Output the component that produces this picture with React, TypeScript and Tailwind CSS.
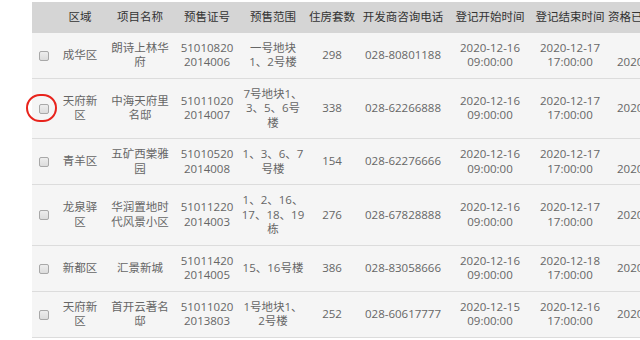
import React from "react";

interface Row {
  area: string[];
  name: string[];
  permit: string[];
  range: string[];
  units: string;
  phone: string;
  start: string[];
  end: string[];
  status: string[];
}

const rows: Row[] = [
  {
    area: ["成华区"],
    name: ["朗诗上林华", "府"],
    permit: ["51010820", "2014006"],
    range: ["一号地块", "1、2号楼"],
    units: "298",
    phone: "028-80801188",
    start: ["2020-12-16", "09:00:00"],
    end: ["2020-12-17", "17:00:00"],
    status: ["\u00a0", "2020-12-19"],
  },
  {
    area: ["天府新", "区"],
    name: ["中海天府里", "名邸"],
    permit: ["51011020", "2014007"],
    range: ["7号地块1、", "3、5、6号", "楼"],
    units: "338",
    phone: "028-62266888",
    start: ["2020-12-16", "09:00:00"],
    end: ["2020-12-17", "17:00:00"],
    status: ["2020-12-19"],
  },
  {
    area: ["青羊区"],
    name: ["五矿西棠雅", "园"],
    permit: ["51010520", "2014008"],
    range: ["1、3、6、7", "号楼"],
    units: "154",
    phone: "028-62276666",
    start: ["2020-12-16", "09:00:00"],
    end: ["2020-12-17", "17:00:00"],
    status: ["\u00a0", "2020-12-19"],
  },
  {
    area: ["龙泉驿", "区"],
    name: ["华润置地时", "代风景小区"],
    permit: ["51011220", "2014003"],
    range: ["1、2、16、", "17、18、19", "栋"],
    units: "276",
    phone: "028-67828888",
    start: ["2020-12-16", "09:00:00"],
    end: ["2020-12-17", "17:00:00"],
    status: ["2020-12-19"],
  },
  {
    area: ["新都区"],
    name: ["汇景新城"],
    permit: ["51011420", "2014005"],
    range: ["15、16号楼"],
    units: "386",
    phone: "028-83058666",
    start: ["2020-12-16", "09:00:00"],
    end: ["2020-12-18", "17:00:00"],
    status: ["2020-12-20"],
  },
  {
    area: ["天府新", "区"],
    name: ["首开云著名", "邸"],
    permit: ["51011020", "2013803"],
    range: ["1号地块1、", "2号楼"],
    units: "252",
    phone: "028-60617777",
    start: ["2020-12-15", "09:00:00"],
    end: ["2020-12-16", "17:00:00"],
    status: ["2020-12-18"],
  },
];

const headers = [
  "区域",
  "项目名称",
  "预售证号",
  "预售范围",
  "住房套数",
  "开发商咨询电话",
  "登记开始时间",
  "登记结束时间",
  "资格已审核名单公示时间",
];

function Lines({ lines }: { lines: string[] }) {
  return (
    <>
      {lines.map((l, i) => (
        <div key={i} className="whitespace-nowrap">
          {l}
        </div>
      ))}
    </>
  );
}

function Checkbox() {
  return (
    <span className="inline-block h-[10px] w-[10px] rounded-[2px] border border-[#a8a8a8] bg-gradient-to-b from-[#ededed] to-[#dcdcdc] align-middle" />
  );
}

export default function App() {
  return (
    <div
      className="relative h-[340px] w-[640px] overflow-hidden bg-white pl-8 pt-[2px] text-[11.5px] leading-[14.5px]"
      style={{ fontFamily: '"Open Sans", "Noto Sans CJK SC", sans-serif' }}
    >
      <table className="w-[700px] table-fixed border-collapse bg-[#f5f5f5] text-center text-[#666]">
        <colgroup>
          <col className="w-[22px]" />
          <col className="w-[52px]" />
          <col className="w-[68px]" />
          <col className="w-[66px]" />
          <col className="w-[66px]" />
          <col className="w-[52px]" />
          <col className="w-[90px]" />
          <col className="w-[84px]" />
          <col className="w-[76px]" />
          <col className="w-[124px]" />
        </colgroup>
        <thead>
          <tr className="bg-[#d5d5d5] text-[#333]">
            <th className="py-2 font-normal" />
            {headers.map((h) => (
              <th
                key={h}
                className="whitespace-nowrap py-2 font-normal first:pl-0 last:text-left"
              >
                {h}
              </th>
            ))}
          </tr>
        </thead>
        <tbody>
          {rows.map((r, i) => (
            <tr key={i} className="border-b border-[#dcdcdc]">
              <td className="py-2 pl-[1px] align-middle">
                <Checkbox />
              </td>
              <td className="py-2 align-middle">
                <Lines lines={r.area} />
              </td>
              <td className="py-2 align-middle">
                <Lines lines={r.name} />
              </td>
              <td className="py-2 align-middle">
                <Lines lines={r.permit} />
              </td>
              <td className="py-2 align-middle">
                <Lines lines={r.range} />
              </td>
              <td className="py-2 align-middle">{r.units}</td>
              <td className="py-2 align-middle">{r.phone}</td>
              <td className="py-2 align-middle">
                <Lines lines={r.start} />
              </td>
              <td className="py-2 align-middle">
                <Lines lines={r.end} />
              </td>
              <td className="py-2 pl-[9px] text-left align-middle">
                <Lines lines={r.status} />
              </td>
            </tr>
          ))}
        </tbody>
      </table>
      <span className="absolute left-[26px] top-[94px] h-[28px] w-[31px] rounded-full border-2 border-[#e8231c]" />
    </div>
  );
}
